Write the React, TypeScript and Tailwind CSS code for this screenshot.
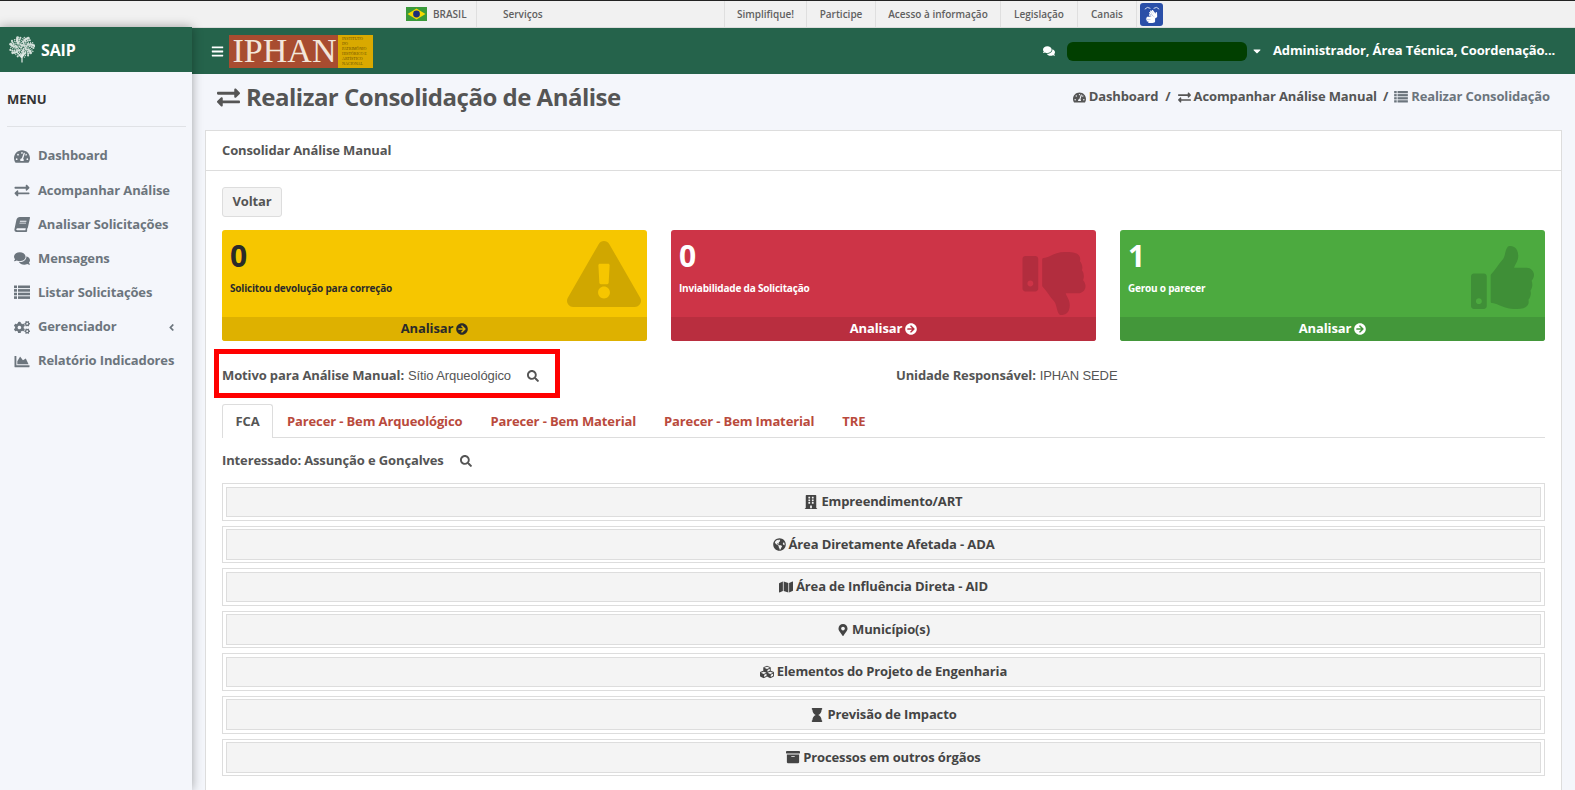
import {
  FaAngleLeft, FaArchive, FaArrowCircleRight, FaBars, FaBook, FaBuilding, FaCaretDown, FaChartArea, FaCogs, FaComments,
  FaCubes, FaExchangeAlt, FaExclamationTriangle, FaGlobeAmericas, FaHourglass, FaMap, FaMapMarkerAlt,
  FaSearch, FaSignLanguage, FaTachometerAlt, FaThumbsDown, FaThumbsUp,
} from "react-icons/fa";

// icone de lista com quadradinhos colados nas barras
function ListIcon({ className }: { className?: string }) {
  return (
    <svg viewBox="0 0 16 14" className={className} fill="currentColor">
      {[0, 3.6, 7.2, 10.8].map((y) => (
        <g key={y}>
          <rect x="0" y={y} width="3" height="2.6" />
          <rect x="4" y={y} width="12" height="2.6" />
        </g>
      ))}
    </svg>
  );
}

function SlantedBook({ className }: { className?: string }) {
  return <FaBook className={`-skew-x-12 ${className ?? ""}`} />;
}

const menu = [
  { icon: FaTachometerAlt, label: "Dashboard" },
  { icon: FaExchangeAlt, label: "Acompanhar Análise" },
  { icon: SlantedBook, label: "Analisar Solicitações" },
  { icon: FaComments, label: "Mensagens" },
  { icon: ListIcon, label: "Listar Solicitações" },
  { icon: FaCogs, label: "Gerenciador", arrow: true },
  { icon: FaChartArea, label: "Relatório Indicadores" },
];

const sections = [
  { icon: FaBuilding, label: "Empreendimento/ART", size: "text-[14px]" },
  { icon: FaGlobeAmericas, label: "Área Diretamente Afetada - ADA", size: "text-[13px]" },
  { icon: FaMap, label: "Área de Influência Direta - AID", size: "text-[14px]" },
  { icon: FaMapMarkerAlt, label: "Município(s)", size: "text-[12px]" },
  { icon: FaCubes, label: "Elementos do Projeto de Engenharia", size: "text-[14px]" },
  { icon: FaHourglass, label: "Previsão de Impacto", size: "text-[14px]" },
  { icon: FaArchive, label: "Processos em outros órgãos", size: "text-[14px]" },
];

const tabs = ["Parecer - Bem Arqueológico", "Parecer - Bem Material", "Parecer - Bem Imaterial", "TRE"];

function Flag() {
  return (
    <svg viewBox="0 0 21 14" className="h-[14px] w-[21px]">
      <rect width="21" height="14" fill="#3a9a3a" />
      <path d="M10.5 1.5 19.5 7 10.5 12.5 1.5 7Z" fill="#f5d800" />
      <circle cx="10.5" cy="7" r="3.4" fill="#1d2f7a" />
    </svg>
  );
}

function TreeLogo() {
  // folhagem: pontinhos espalhados de forma fixa
  const dots: number[][] = [];
  for (let i = 0; i < 90; i++) {
    const a = i * 2.399;
    const r = Math.sqrt(i / 90);
    dots.push([13 + Math.cos(a) * r * 12.5, 11 + Math.sin(a) * r * 10.5, 0.7 + (i % 3) * 0.35]);
  }
  return (
    <svg viewBox="0 0 26 27" className="h-[27px] w-[26px]">
      {dots.map(([x, y, r], i) => (
        <circle key={i} cx={x} cy={y} r={r} fill="#e4ece8" opacity={0.9} />
      ))}
      <path d="M13 26.5V18M13 22l-4-5M13 21l4-5" stroke="#e4ece8" strokeWidth="1.2" fill="none" />
    </svg>
  );
}

function GovLink({ label, w }: { label: string; w: string }) {
  return <div className={`flex h-[26px] items-center justify-center border-r border-[#dfdfdf] ${w}`}>{label}</div>;
}

function StatCard({ value, label, bg, footer, text, icon: Icon, iconClass }: {
  value: number; label: string; bg: string; footer: string; text: string;
  icon: React.ComponentType<{ className?: string }>; iconClass: string;
}) {
  return (
    <div className={`relative h-[111px] overflow-hidden rounded-[3px] ${bg} ${text}`}>
      <div className="h-[87px] px-2 pt-[5px]">
        <div className="text-[30px] leading-[42px] font-bold">{value}</div>
        <div className="mt-[4px] text-[10px] leading-[14px] font-bold tracking-[-0.2px]">{label}</div>
      </div>
      <Icon className={iconClass} />
      <div className={`flex h-6 items-center justify-center gap-[3px] text-[13px] font-bold ${footer}`}>
        Analisar <FaArrowCircleRight className="text-[12px]" />
      </div>
    </div>
  );
}

export default function App() {
  return (
    <div className="flex h-[790px] flex-col overflow-hidden bg-[#f4f6fb] font-['Open_Sans',sans-serif] tracking-[-0.13px] text-[#555]">
      {/* barra do governo */}
      <div className="flex h-[28px] shrink-0 items-center border-t border-b border-t-[#222] border-b-[#dcdcdc] bg-[#f1f1f1] pl-[406px] text-[10px] font-semibold tracking-normal text-[#606060]">
        <Flag />
        <div className="ml-[6px] flex h-[26px] w-[44px] items-center border-r border-[#dfdfdf]">BRASIL</div>
        <div className="flex h-[26px] w-[248px] items-center border-r border-[#dfdfdf] pl-[26px]">Serviços</div>
        <GovLink label="Simplifique!" w="w-[82px]" />
        <GovLink label="Participe" w="w-[69px]" />
        <GovLink label="Acesso à informação" w="w-[125px]" />
        <GovLink label="Legislação" w="w-[77px]" />
        <GovLink label="Canais" w="w-[59px]" />
        <div className="ml-[3px] flex h-[23px] w-[23px] flex-col items-center justify-center rounded-[3px] bg-[#2a4fa8] text-white">
          <svg viewBox="0 0 20 5" className="h-[4px] w-[18px]" fill="none" stroke="currentColor" strokeWidth="1">
            <path d="M1 4Q4 0 8 3M19 4Q16 0 12 3" />
          </svg>
          <FaSignLanguage className="text-[13px]" />
        </div>
      </div>

      <div className="flex min-h-0 flex-1">
        {/* menu lateral */}
        <aside className="relative z-10 -mt-px w-[192px] shrink-0 bg-[#f4f6fb] shadow-[0_0_10px_rgba(0,0,0,0.35)]">
          <div className="flex h-[45px] items-center gap-[6px] bg-[#25634b] pl-[9px] text-[16px] font-bold text-white">
            <TreeLogo />
            SAIP
          </div>
          <div className="mx-[7px] mr-[6px] flex h-[55px] items-center border-b border-[#e0e2e6] pt-[1px] text-[13px] font-bold text-[#333]">MENU</div>
          <nav className="mt-[12px] text-[13px] font-bold text-[#6c757d]">
            {menu.map((m) => (
              <div key={m.label} className="flex h-[34.2px] items-center pl-[14px]">
                <span className="flex w-[24px] shrink-0"><m.icon className="h-[15px] w-[16px]" /></span>
                <span>{m.label}</span>
                {m.arrow && <FaAngleLeft className="ml-[50px] text-[11px]" />}
              </div>
            ))}
          </nav>
        </aside>

        <main className="min-w-0 flex-1">
          {/* topo verde */}
          <div className="flex h-[46px] items-center bg-[#25634b] text-white">
            <FaBars className="ml-[19px] text-[13px]" />
            <div className="ml-[5px] flex h-[33px] w-[144px]">
              <div className="flex w-[109px] items-center justify-center bg-[#a84c30] pl-[2px] font-['Liberation_Serif',serif] text-[34px] leading-none tracking-normal text-[#f3e6da]">IPHAN</div>
              <div className="flex w-[35px] flex-col justify-center bg-[#d9a900] px-[4px] font-['Liberation_Serif',serif] text-[4px] leading-[5px] tracking-normal text-[#6b5200]">
                <span>INSTITUTO DO</span><span>PATRIMÔNIO</span><span>HISTÓRICO E</span><span>ARTÍSTICO</span><span>NACIONAL</span>
              </div>
            </div>
            <FaComments className="ml-[670px] text-[12px]" />
            <div className="ml-[12px] h-[19px] w-[180px] rounded-[6px] bg-[#013f00]" />
            <FaCaretDown className="ml-[4px] text-[12px]" />
            <span className="ml-[10px] text-[13px] font-bold whitespace-nowrap">Administrador, Área Técnica, Coordenação...</span>
          </div>

          {/* título e breadcrumb */}
          <div className="mb-[10px] flex h-[46px] items-center pl-[25px] pr-[25px]">
            <FaExchangeAlt className="text-[23px]" />
            <h1 className="ml-[6px] text-[24px] font-bold tracking-[-0.5px]">Realizar Consolidação de Análise</h1>
            <div className="ml-auto flex items-center text-[13px] font-bold">
              <FaTachometerAlt className="mr-[3px] text-[13px]" />Dashboard
              <span className="mx-[7px]">/</span>
              <FaExchangeAlt className="mr-[3px] text-[13px]" />Acompanhar Análise Manual
              <span className="mx-[6px]">/</span>
              <span className="flex items-center text-[#6c757d]"><ListIcon className="mr-[3px] h-[12px] w-[14px]" />Realizar Consolidação</span>
            </div>
          </div>

          {/* cartão principal */}
          <div className="ml-[13px] mr-[13px] border border-[#ddd] bg-white pb-10">
            <div className="flex h-[40px] items-center border-b border-[#ddd] pl-4 text-[13px] font-bold">Consolidar Análise Manual</div>
            <div className="px-4 pt-[16px]">
              <button className="h-[30px] w-[60px] rounded-[3px] border border-[#ddd] bg-[#f4f4f4] text-[13px] font-bold">Voltar</button>

              <div className="mt-[13px] grid grid-cols-3 gap-6">
                <StatCard value={0} label="Solicitou devolução para correção" bg="bg-[#f6c600]" footer="bg-[#deb100]" text="text-[#2a2a2a]"
                  icon={FaExclamationTriangle} iconClass="absolute right-[6px] top-[10px] h-[68px] w-[74px] text-[#d0a700]" />
                <StatCard value={0} label="Inviabilidade da Solicitação" bg="bg-[#cd3447]" footer="bg-[#b92e3f]" text="text-white"
                  icon={FaThumbsDown} iconClass="absolute right-[9px] top-[22px] h-[63px] w-[66px] text-[#b22d3e]" />
                <StatCard value={1} label="Gerou o parecer" bg="bg-[#4caa3f]" footer="bg-[#43973a]" text="text-white"
                  icon={FaThumbsUp} iconClass="absolute right-[9px] top-[16px] h-[63px] w-[67px] text-[#3f8f37]" />
              </div>

              <div className="relative mt-[8px] flex h-[49px] items-center">
                <div className="-ml-[8px] flex h-[49px] w-[346px] items-center border-[5px] border-[#ff0000] pl-[3px] pt-[4px] text-[13px]">
                  <b className="font-bold">Motivo para Análise Manual:</b>
                  <span className="ml-[4px] font-['Liberation_Sans',sans-serif] text-[13px] tracking-[-0.1px]">Sítio Arqueológico</span>
                  <FaSearch className="ml-[16px] text-[12px]" />
                </div>
                <div className="ml-[336px] pt-[4px] text-[13px]">
                  <b className="font-bold">Unidade Responsável:</b>
                  <span className="ml-[4px] font-['Liberation_Sans',sans-serif] text-[13px] tracking-[-0.1px]">IPHAN SEDE</span>
                </div>
              </div>

              <div className="mt-[6px] flex h-[34px] items-end border-b border-[#ddd] text-[13px] font-bold">
                <div className="-mb-px flex h-[34px] w-[51px] items-center justify-center rounded-t-[3px] border border-b-0 border-[#ddd] bg-white pt-[1px]">FCA</div>
                {tabs.map((t) => (
                  <div key={t} className="flex h-[33px] items-center px-[14px] pt-[2px] text-[#b94a3c]">{t}</div>
                ))}
              </div>

              <div className="mt-[13px] flex h-[20px] items-center text-[13px] font-bold">
                Interessado: Assunção e Gonçalves
                <FaSearch className="ml-[16px] text-[12px]" />
              </div>

              <div className="mt-[12px] flex flex-col gap-[5px]">
                {sections.map((s) => (
                  <div key={s.label} className="border border-[#ddd] px-[3px] py-[2.5px]">
                    <div className="flex h-[30.6px] items-center justify-center gap-[3px] border border-[#ddd] bg-[#f4f4f4] text-[13px] font-bold text-[#444]">
                      <s.icon className={s.size} />
                      {s.label}
                    </div>
                  </div>
                ))}
              </div>
            </div>
          </div>
        </main>
      </div>
    </div>
  );
}
